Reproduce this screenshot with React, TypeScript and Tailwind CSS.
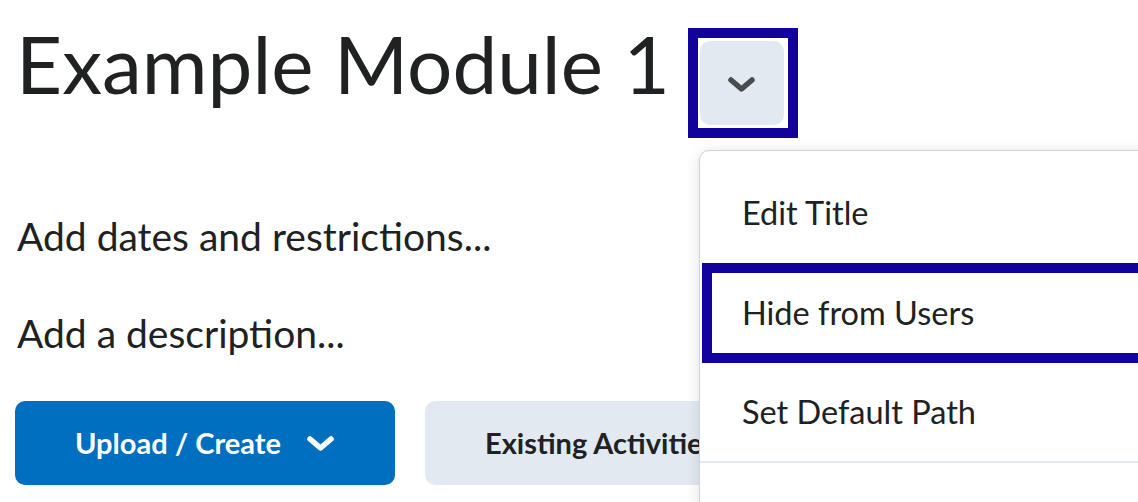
import React from 'react';

const menuItems = ['Edit Title', 'Hide from Users', 'Set Default Path', 'Set All Completion Tracking'];

function Chevron({ className, stroke }: { className: string; stroke: string }) {
    return (
        <svg className={className} viewBox="0 0 29 17" fill="none">
            <path d="M4 4 L14.5 13 L25 4" stroke={stroke} strokeWidth="5.5" strokeLinecap="round" strokeLinejoin="round" />
        </svg>
    );
}

export default function App() {
    return (
        <div className="relative w-[1138px] h-[502px] overflow-hidden bg-white text-[#202122] font-['Lato',sans-serif]">
            {/* Heading row */}
            <div className="flex items-start pl-[16px]">
                <h1 className="text-[80px] leading-[100px] font-normal mt-[13px] whitespace-nowrap">Example Module 1</h1>
                <div className="ml-[18px] mt-[28px] border-[10px] border-[#12039c] pt-[3px] pb-[3px] pl-[2px] pr-[4px]">
                    <button className="w-[84px] h-[84px] rounded-[10px] bg-[#e3e9f1] flex items-center justify-center">
                        <Chevron className="w-[29px] h-[17px] mt-[2px]" stroke="#494c4e" />
                    </button>
                </div>
            </div>

            {/* Module details */}
            <p className="pl-[17px] mt-[75px] text-[39px] leading-[46px]">Add dates and restrictions...</p>
            <p className="pl-[17px] mt-[51px] text-[39px] leading-[46px]">Add a description...</p>

            {/* Actions */}
            <div className="flex gap-[30px] pl-[15px] mt-[45px]">
                <button className="w-[380px] h-[84px] rounded-[10px] bg-[#006fbf] text-white text-[29px] font-bold flex items-center justify-center gap-[25px]">
                    <span>Upload / Create</span>
                    <Chevron className="w-[29px] h-[17px]" stroke="#ffffff" />
                </button>
                <button className="w-[380px] h-[84px] rounded-[10px] bg-[#e3e9f1] text-[29px] font-bold flex items-center pl-[60px] whitespace-nowrap">
                    Existing Activities
                </button>
            </div>

            {/* Context menu */}
            <div className="absolute left-[699px] top-[150px] w-[460px] bg-white border border-[#cdd5dc] rounded-[10px] shadow-[0_2px_14px_rgba(0,0,0,0.12)] pt-[12px]">
                {menuItems.map((item, i) => (
                    <div
                        key={item}
                        className={
                            i === 1
                                ? 'h-[100px] flex items-center pl-[30px] ml-[2px] border-[10px] border-[#12039c] text-[32.5px]'
                                : i === 0
                                  ? 'h-[100px] flex items-center pl-[42px] text-[32.5px]'
                                  : i === 2
                                    ? 'h-[100px] flex items-center pl-[42px] text-[32.5px] border-b-2 border-[#e3e9f1]'
                                    : 'h-[100px] flex items-center pl-[42px] pt-[6px] text-[32.5px] whitespace-nowrap'
                        }
                    >
                        {item}
                    </div>
                ))}
            </div>
        </div>
    );
}
